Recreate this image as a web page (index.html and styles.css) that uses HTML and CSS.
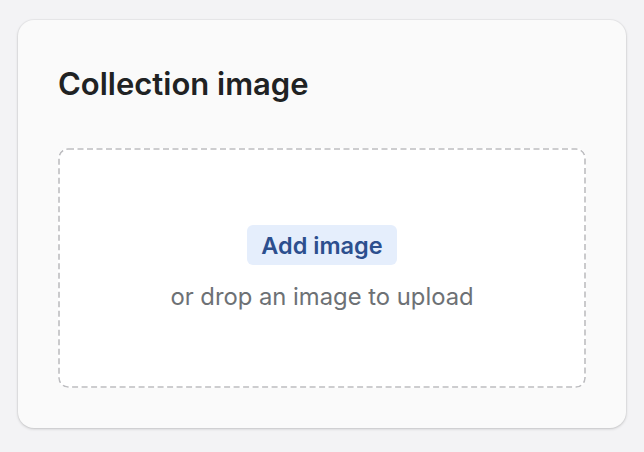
FILE: index.html
```html
<!DOCTYPE html>
<html lang="en">
<head>
<meta charset="utf-8">
<title>Collection image</title>
<link rel="stylesheet" href="styles.css">
</head>
<body>
  <section class="card">
    <h2 class="card-title">Collection image</h2>
    <div class="dropzone">
      <div class="dropzone-content">
        <button class="add-button" type="button">Add image</button>
        <p class="hint">or drop an image to upload</p>
      </div>
    </div>
  </section>
</body>
</html>
```

FILE: styles.css
```css
html, body {
  margin: 0;
  padding: 0;
}
body {
  background: #f3f3f5;
  font-family: Inter, "Noto Sans", sans-serif;
  width: 644px;
  height: 452px;
  overflow: hidden;
}
.card {
  margin: 20px 18px 0 18px;
  height: 408px;
  box-sizing: border-box;
  padding: 40px;
  background: #fafafa;
  border-radius: 16px;
  box-shadow: 0 1px 3px rgba(0,0,0,0.18), 0 0 0 1px rgba(0,0,0,0.03);
  display: flex;
  flex-direction: column;
}
.card-title {
  margin: 0;
  font-size: 31px;
  line-height: 48px;
  font-weight: 600;
  color: #202223;
  letter-spacing: 0;
}
.dropzone {
  margin-top: 40px;
  height: 240px;
  box-sizing: border-box;
  background-color: #ffffff;
  border-radius: 10px;
  background-image: url("data:image/svg+xml,%3Csvg xmlns='http://www.w3.org/2000/svg' width='100%25' height='100%25'%3E%3Crect x='1' y='1' width='calc(100%25 - 2px)' height='calc(100%25 - 2px)' rx='9' ry='9' fill='none' stroke='%23bdbdc0' stroke-width='1.6' stroke-dasharray='6 3.5'/%3E%3C/svg%3E");
  display: flex;
  align-items: center;
  justify-content: center;
}
.dropzone-content {
  display: flex;
  flex-direction: column;
  align-items: center;
  margin-top: 2px;
}
.add-button {
  font-family: inherit;
  font-size: 23.5px;
  font-weight: 600;
  color: #2c4f8e;
  background: #e5eefc;
  border: none;
  border-radius: 6px;
  height: 40px;
  padding: 0 14px;
  cursor: pointer;
}
.hint {
  margin: 16px 0 0 0;
  font-size: 23.8px;
  line-height: 32px;
  color: #6d7175;
}
```
